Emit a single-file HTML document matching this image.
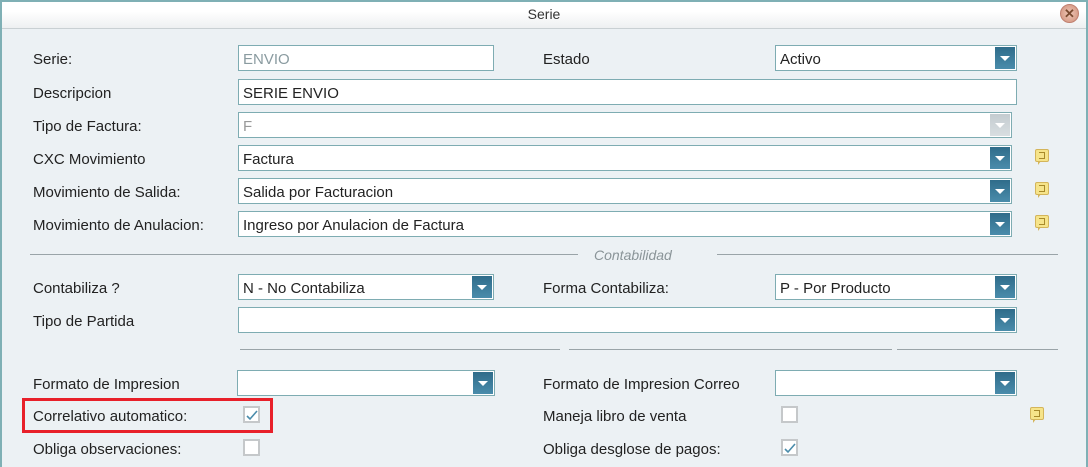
<!DOCTYPE html><html><head><style>
*{box-sizing:border-box;margin:0;padding:0}
body{width:1088px;height:467px;overflow:hidden;background:#ecf1f4;font-family:"Liberation Sans",Tahoma,sans-serif;font-size:15px;color:#222;position:relative}
.win{position:absolute;left:0;top:0;width:1088px;height:467px;border:2px solid #7fb0b5;border-bottom:none}
.title{position:absolute;left:0;top:0;width:1088px;height:29px;background:linear-gradient(#fff 0,#fff 40%,#eef0f1 100%);border-bottom:1px solid #c9d0d3;text-align:center;line-height:29px;font-size:14px;color:#333}
.l{position:absolute;white-space:nowrap;margin-top:2px}
.i{position:absolute;background:#fff;border:1px solid #7eacb2;height:26px;line-height:24px;padding-top:2px;padding-left:4px;white-space:nowrap}
.d{position:absolute;right:1px;top:1px;width:20px;height:22px;background:linear-gradient(#2f6c8a,#4a8cab)}
.d:after{content:"";position:absolute;left:5px;top:9px;border-left:5px solid transparent;border-right:5px solid transparent;border-top:5px solid #fff}
.dg{background:linear-gradient(#c4ccd0,#d8dee1)}
.cb{position:absolute;width:17px;height:17px;border:2px solid #c5c8ca;background:#fff}
.ln{position:absolute;height:1px;background:#9aa4a8}
.h{position:absolute;width:14px;height:13px;background:#f6e48a;border:1px solid #d4b55a;border-radius:2px}
.h:after{content:"";position:absolute;left:2px;top:11px;border-top:4px solid #d4b55a;border-right:3px solid transparent}
.h:before{content:"";position:absolute;left:3px;top:2px;width:5px;height:5px;border:1.5px solid #a88a2a;border-left:none}
</style></head><body>
<div class="title">Serie</div>
<div style="position:absolute;left:1060px;top:4px;width:19px;height:19px;border-radius:50%;background:radial-gradient(#f0c8b8,#cf8e78);border:1px solid #c08070;text-align:center;line-height:17px;color:#7a4a30;font-size:13px;font-weight:bold">✕</div>
<div class="win"></div>

<div class="l" style="left:33px;top:49px">Serie:</div>
<div class="i" style="left:238px;top:45px;width:256px;color:#8a9ba0">ENVIO</div>
<div class="l" style="left:543px;top:49px">Estado</div>
<div class="i" style="left:775px;top:45px;width:242px">Activo<div class="d"></div></div>

<div class="l" style="left:33px;top:83px">Descripcion</div>
<div class="i" style="left:238px;top:79px;width:779px">SERIE ENVIO</div>

<div class="l" style="left:33px;top:116px">Tipo de Factura:</div>
<div class="i" style="left:238px;top:112px;width:774px;color:#999">F<div class="d dg"></div></div>

<div class="l" style="left:33px;top:149px">CXC Movimiento</div>
<div class="i" style="left:238px;top:145px;width:774px">Factura<div class="d"></div></div>
<div class="h" style="left:1035px;top:149px"></div>

<div class="l" style="left:33px;top:182px">Movimiento de Salida:</div>
<div class="i" style="left:238px;top:178px;width:774px">Salida por Facturacion<div class="d"></div></div>
<div class="h" style="left:1035px;top:182px"></div>

<div class="l" style="left:33px;top:215px">Movimiento de Anulacion:</div>
<div class="i" style="left:238px;top:211px;width:774px">Ingreso por Anulacion de Factura<div class="d"></div></div>
<div class="h" style="left:1035px;top:215px"></div>

<div class="ln" style="left:30px;top:254px;width:548px"></div>
<div class="l" style="left:594px;top:245px;font-style:italic;color:#8a9498;font-size:14px">Contabilidad</div>
<div class="ln" style="left:717px;top:254px;width:341px"></div>

<div class="l" style="left:33px;top:278px">Contabiliza ?</div>
<div class="i" style="left:238px;top:274px;width:256px">N - No Contabiliza<div class="d"></div></div>
<div class="l" style="left:543px;top:278px">Forma Contabiliza:</div>
<div class="i" style="left:775px;top:274px;width:242px">P - Por Producto<div class="d"></div></div>

<div class="l" style="left:33px;top:311px">Tipo de Partida</div>
<div class="i" style="left:238px;top:307px;width:779px"><div class="d"></div></div>

<div class="ln" style="left:240px;top:349px;width:320px"></div>
<div class="ln" style="left:569px;top:349px;width:323px"></div>
<div class="ln" style="left:897px;top:349px;width:161px"></div>

<div class="l" style="left:33px;top:374px">Formato de Impresion</div>
<div class="i" style="left:237px;top:370px;width:258px"><div class="d"></div></div>
<div class="l" style="left:543px;top:374px">Formato de Impresion Correo</div>
<div class="i" style="left:775px;top:370px;width:242px"><div class="d"></div></div>

<div style="position:absolute;left:22px;top:398px;width:251px;height:35px;border:3px solid #e8202a"></div>
<div class="l" style="left:33px;top:406px">Correlativo automatico:</div>
<div class="cb" style="left:243px;top:406px"><svg width="13" height="13" style="position:absolute;left:0;top:0"><path d="M2 8 L5 11 L12 3" fill="none" stroke="#4a8cab" stroke-width="1.6"/></svg></div>
<div class="l" style="left:543px;top:406px">Maneja libro de venta</div>
<div class="cb" style="left:781px;top:406px"></div>
<div class="h" style="left:1030px;top:407px"></div>

<div class="l" style="left:33px;top:439px">Obliga observaciones:</div>
<div class="cb" style="left:243px;top:439px"></div>
<div class="l" style="left:543px;top:439px">Obliga desglose de pagos:</div>
<div class="cb" style="left:781px;top:439px"><svg width="13" height="13" style="position:absolute;left:0;top:0"><path d="M2 8 L5 11 L12 3" fill="none" stroke="#4a8cab" stroke-width="1.6"/></svg></div>
</body></html>
